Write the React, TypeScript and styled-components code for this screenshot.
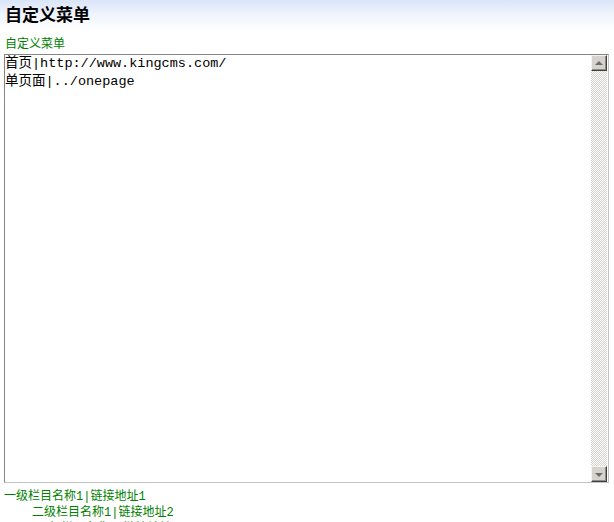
import React, { useState } from 'react';
import styled, { createGlobalStyle } from 'styled-components';

const GlobalStyle = createGlobalStyle`
  html, body {
    margin: 0;
    padding: 0;
    background: #fff;
    overflow: hidden;
  }
  body {
    font-family: "Liberation Sans", "Noto Sans CJK SC", sans-serif;
  }
`;

// Styled components
const Page = styled.div`
  width: 614px;
`;

const Title = styled.h2`
  margin: 0;
  height: 30px;
  padding-left: 5px;
  line-height: 31px;
  font-size: 17px;
  font-weight: bold;
  color: #000;
  background: linear-gradient(to bottom, #d9e5f8 0%, #eef3fc 45%, #ffffff 100%);
`;

const Field = styled.div`
  padding: 0 5px 0 4px;
`;

const Label = styled.div`
  margin-top: 6px;
  padding-left: 1px;
  font-size: 12px;
  line-height: 16px;
  color: #008000;
`;

const Frame = styled.div`
  margin-top: 2px;
  height: 429px;
  box-sizing: border-box;
  display: flex;
  border: 1px solid;
  border-color: #858585 #c3c3c3 #c3c3c3 #858585;
  background: #fff;
`;

const Editor = styled.textarea`
  flex: 1;
  margin: 0;
  padding: 0;
  border: none;
  outline: none;
  resize: none;
  overflow: hidden;
  font-family: "Liberation Mono", "Noto Sans CJK SC", monospace;
  font-size: 13.5px;
  line-height: 18px;
  color: #000;
  background: transparent;
`;

const Scrollbar = styled.div`
  width: 16px;
  margin-right: 1px;
  display: flex;
  flex-direction: column;
`;

const ArrowButton = styled.div<{ $down?: boolean }>`
  height: 16px;
  box-sizing: border-box;
  display: flex;
  align-items: center;
  justify-content: center;
  background: #d6d3ce;
  border-style: solid;
  border-width: 1px;
  border-color: #f4f3f1 #404040 #404040 #f4f3f1;
  box-shadow: inset -1px -1px 0 #8e8c88;

  &::after {
    content: '';
    width: 0;
    height: 0;
    border-left: 4px solid transparent;
    border-right: 4px solid transparent;
    ${(p) => (p.$down ? 'border-top: 4px solid #6f6d6a;' : 'border-bottom: 4px solid #6f6d6a;')}
    margin-top: ${(p) => (p.$down ? '1px' : '-1px')};
  }
`;

const Track = styled.div`
  flex: 1;
  background: repeating-conic-gradient(#d6d3ce 0 25%, #ffffff 0 50%) 0 0 / 2px 2px;
`;

const Hint = styled.div`
  margin-top: 6px;
  font-family: "Liberation Mono", "Noto Sans CJK SC", monospace;
  font-size: 12px;
  line-height: 16px;
  color: #008000;
`;

const HintLine = styled.div<{ $indent: number }>`
  padding-left: ${(p) => p.$indent}px;
  white-space: nowrap;
`;

const App = () => {
  const [menu, setMenu] = useState('首页|http://www.kingcms.com/\n单页面|../onepage');

  return (
    <>
      <GlobalStyle />
      <Page>
        <Title>自定义菜单</Title>
        <Field>
          <Label>自定义菜单</Label>
          <Frame>
            <Editor value={menu} onChange={(e) => setMenu(e.target.value)} spellCheck={false} />
            <Scrollbar>
              <ArrowButton />
              <Track />
              <ArrowButton $down />
            </Scrollbar>
          </Frame>
        </Field>
        <Hint>
          <HintLine $indent={4}>一级栏目名称1|链接地址1</HintLine>
          <HintLine $indent={32}>二级栏目名称1|链接地址2</HintLine>
          <HintLine $indent={37}>二级栏目名称2|链接地址3</HintLine>
        </Hint>
      </Page>
    </>
  );
};

export default App;
